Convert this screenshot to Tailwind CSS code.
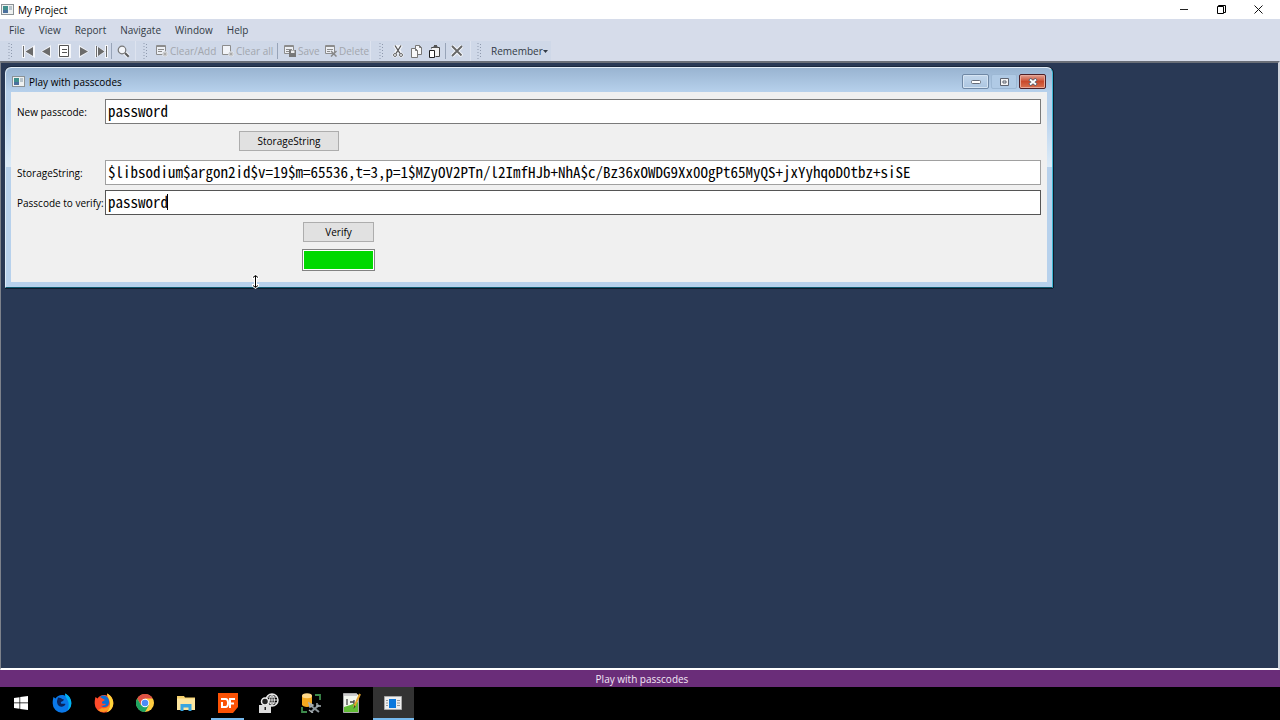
<!DOCTYPE html>
<html lang="en">
    <head>
        <meta charset="UTF-8" />
        <meta name="viewport" content="width=device-width, initial-scale=1.0" />
        <title>My Project</title>
        <script src="https://cdn.jsdelivr.net/npm/@tailwindcss/browser@4"></script>
    </head>
    <body class="flex flex-col h-screen overflow-hidden bg-black font-['Open_Sans','Noto_Sans',sans-serif] text-[10px] leading-4 text-black">
        <!-- title bar -->
        <header class="flex items-center h-[19px] shrink-0 bg-white pl-px">
            <svg class="w-[13px] h-[11px]" viewBox="0 0 13 11">
                <rect x=".5" y=".5" width="12" height="10" fill="#eef1f1" stroke="#8b9296" />
                <rect x="2" y="2" width="5" height="7" fill="#3f8f8c" />
                <rect x="2" y="6" width="5" height="3" fill="#4a6f9c" />
                <rect x="8" y="2" width="3" height="4" fill="#b8c4cc" />
            </svg>
            <h1 class="ml-1">My Project</h1>
            <div class="ml-auto flex pr-[3px]">
                <button class="w-[37px] h-[19px] grid place-items-center" aria-label="Minimize">
                    <svg class="w-[9px] h-[9px]" viewBox="0 0 9 9"><path d="M0 4.500h8" stroke="#222" /></svg>
                </button>
                <button class="w-[37px] h-[19px] grid place-items-center" aria-label="Restore">
                    <svg class="w-[9px] h-[9px]" viewBox="0 0 9 9" fill="none" stroke="#000">
                        <path d="M.5 1.500h6v7h-6zM1.500 1V.5h7V7.500H7" />
                    </svg>
                </button>
                <button class="w-[37px] h-[19px] grid place-items-center" aria-label="Close">
                    <svg class="w-[9px] h-[9px]" viewBox="0 0 9 9"><path d="M.5.5l8 8M8.500.5l-8 8" stroke="#111" /></svg>
                </button>
            </div>
        </header>

        <!-- menu -->
        <nav class="flex items-center h-[22px] shrink-0 bg-[#d6dcea] pl-[9px] gap-[14px] text-[#333b46]">
            <button>File</button>
            <button>View</button>
            <button>Report</button>
            <button>Navigate</button>
            <button>Window</button>
            <button>Help</button>
        </nav>

        <!-- toolbar -->
        <div class="flex h-5 shrink-0 bg-[#d6dcea] text-[#a2a6ad]">
            <div class="flex items-center w-[135px] bg-[#cfd8e8] pl-2">
                <svg class="w-[5px] h-4 mr-[6px]" viewBox="0 0 5 16"><path d="M1 0v16M3.500 1v15" stroke="#8e99ad" stroke-dasharray="1 2" /></svg>
                <button class="w-[18px] grid place-items-center" aria-label="First">
                    <svg class="w-[14px] h-[13px]" viewBox="0 0 14 13"><path d="M1 0h3v13H1zM3 6.500L14 0v13z" fill="#f4f6fa" /><path d="M2 1h1v11H2zM4.500 6.500L12 2v9z" fill="#6b6b6b" /></svg>
                </button>
                <button class="w-[18px] grid place-items-center" aria-label="Previous">
                    <svg class="w-[11px] h-[13px]" viewBox="0 0 11 13"><path d="M0 6.500L10 0v13z" fill="#f4f6fa" /><path d="M1 6.500L9 2v9z" fill="#6b6b6b" /></svg>
                </button>
                <button class="w-[19px] grid place-items-center" aria-label="List">
                    <svg class="w-[13px] h-[14px]" viewBox="0 0 13 14"><rect width="13" height="14" fill="#f4f6fa" /><path d="M1.500 1.500h9v11h-9zM4 5.500h5M4 8.500h5" fill="#fff" stroke="#555" /></svg>
                </button>
                <button class="w-[18px] grid place-items-center" aria-label="Next">
                    <svg class="w-[11px] h-[13px]" viewBox="0 0 11 13"><path d="M1 0v13l10-6.500z" fill="#f4f6fa" /><path d="M2 2v9l8-4.500z" fill="#6b6b6b" /></svg>
                </button>
                <button class="w-[19px] grid place-items-center" aria-label="Last">
                    <svg class="w-[14px] h-[13px]" viewBox="0 0 14 13"><path d="M0 0v13l11-6.500zM10 0h3v13h-3z" fill="#f4f6fa" /><path d="M1 1h1v11H1zM3 2v9l6.500-4.500zM11 1h1v11h-1z" fill="#6b6b6b" /></svg>
                </button>
                <span class="w-px h-4 bg-[#98a4b8]"></span>
                <button class="w-[23px] grid place-items-center" aria-label="Find">
                    <svg class="w-[13px] h-[13px]" viewBox="0 0 13 13" fill="none"><path d="M7.500 7.500l4 4" stroke="#f4f6fa" stroke-width="4" /><circle cx="5" cy="5" r="3.800" fill="#f4f6fa" stroke="#777" stroke-width="1.200" /><path d="M8 8l3.700 3.700" stroke="#5c5c5c" stroke-width="2" /></svg>
                </button>
            </div>
            <div class="flex items-center w-[235px] bg-[#cfd8e8] border-l border-[#dde3ef] pl-[7px]">
                <svg class="w-[5px] h-4 mr-[8px]" viewBox="0 0 5 16"><path d="M1 0v16M3.500 1v15" stroke="#8e99ad" stroke-dasharray="1 2" /></svg>
                <button class="flex items-center gap-[2px] w-[66px]">
                    <svg class="w-3 h-3 shrink-0" viewBox="0 0 12 12"><path d="M.5.500h9v9h-9z" fill="#eceff4" stroke="#8c8c8c" /><path d="M1 1.500h8M2 4.500h6M2 6.500h4" stroke="#8c8c8c" /><circle cx="9" cy="9" r="2.800" fill="#eceff4" /><path d="M9 6.500v5M6.500 9h5M7.500 7.500l3 3M10.500 7.500l-3 3" stroke="#aaa" /></svg>
                    Clear/Add
                </button>
                <button class="flex items-center gap-[2px] w-[54px]">
                    <svg class="w-3 h-3 shrink-0" viewBox="0 0 12 12"><path d="M.5.500h8v9h-8z" fill="#f2f4f8" stroke="#8c8c8c" /><circle cx="9" cy="9" r="2.800" fill="#eceff4" /><path d="M9 6.500v5M6.500 9h5M7.500 7.500l3 3M10.500 7.500l-3 3" stroke="#aaa" /></svg>
                    Clear all
                </button>
                <span class="w-px h-4 mr-[6px] ml-px bg-[#98a4b8]"></span>
                <button class="flex items-center gap-[2px] w-[41px]">
                    <svg class="w-3 h-3 shrink-0" viewBox="0 0 12 12"><path d="M.5.500h9v8h-9z" fill="#eceff4" stroke="#8c8c8c" /><path d="M1 1.500h8M2 4.500h6M2 6.500h3" stroke="#8c8c8c" /><path d="M5 5h7v7H5z" fill="#777" /><path d="M7 5.500h3.500V8H7z" fill="#eee" /></svg>
                    Save
                </button>
                <button class="flex items-center gap-[2px]">
                    <svg class="w-3 h-3 shrink-0" viewBox="0 0 12 12"><path d="M.5.500h9v8h-9z" fill="#eceff4" stroke="#8c8c8c" /><path d="M1 1.500h8M2 4.500h6M2 6.500h3" stroke="#8c8c8c" /><path d="M6 6l5.500 5.500M11.500 6L6 11.500" stroke="#888" stroke-width="1.500" /></svg>
                    Delete
                </button>
            </div>
            <div class="flex items-center w-[100px] bg-[#cfd8e8] border-l border-[#dde3ef] pl-2">
                <svg class="w-[5px] h-4 mr-[5px]" viewBox="0 0 5 16"><path d="M1 0v16M3.500 1v15" stroke="#8e99ad" stroke-dasharray="1 2" /></svg>
                <button class="w-[18px] grid place-items-center" aria-label="Cut">
                    <svg class="w-3 h-[13px]" viewBox="0 0 12 13" fill="none"><path d="M3 0l5 8M9 0L4 8" stroke="#f4f6fa" stroke-width="4" /><circle cx="3" cy="10" r="2.500" fill="#f4f6fa" /><circle cx="9" cy="10" r="2.500" fill="#f4f6fa" /><path d="M3 .5l5 8M9 .5l-5 8" stroke="#555" stroke-width="1.300" /><circle cx="3" cy="10" r="1.500" stroke="#666" /><circle cx="9" cy="10" r="1.500" stroke="#666" /></svg>
                </button>
                <button class="w-[19px] grid place-items-center" aria-label="Copy">
                    <svg class="w-[11px] h-[13px]" viewBox="0 0 11 13" fill="#f7f8fa" stroke="#777"><path d="M4.500.5h4l2 2v7h-6zM8.500.5v2h2" /><path d="M.5 3.500h4l2 2v7h-6zM4.500 3.500v2h2" /></svg>
                </button>
                <button class="w-[17px] grid place-items-center" aria-label="Paste">
                    <svg class="w-[12px] h-[13px]" viewBox="0 0 12 13"><path d="M2.500 3.500V2.500h8v9h-4" fill="#f2f2f2" stroke="#444" /><path d="M4 3V1.500h1V0h3v1.500h1V3z" fill="#555" /><path d="M.5 5.500h5v7h-5z" fill="#fff" stroke="#222" /></svg>
                </button>
                <span class="w-px h-4 mr-[5px] ml-[2px] bg-[#98a4b8]"></span>
                <button aria-label="Remove">
                    <svg class="w-3 h-3" viewBox="0 0 12 12"><path d="M1 1l10 10M11 1L1 11" stroke="#f4f6fa" stroke-width="4" /><path d="M1 1l9.500 9.500M11 1L1 11" stroke="#666" stroke-width="1.800" /></svg>
                </button>
            </div>
            <div class="flex items-center w-[81px] bg-[#cfd8e8] border-l border-[#dde3ef] pl-[6px]">
                <svg class="w-[5px] h-4 mr-[9px]" viewBox="0 0 5 16"><path d="M1 0v16M3.500 1v15" stroke="#8e99ad" stroke-dasharray="1 2" /></svg>
                <button class="flex items-center text-[#333b46]">
                    Remember
                    <svg class="w-[5px] h-[3px]" viewBox="0 0 5 3"><path d="M0 0h5L2.500 3z" fill="#333b46" /></svg>
                </button>
            </div>
        </div>

        <!-- workspace -->
        <main class="relative flex-1 min-h-0 bg-[#293955] border-t-2 border-t-[#6a6f78] border-l border-l-[#7d828b] border-r-2 border-r-[#d0d4dc] border-b-2 border-b-white">
            <section class="absolute left-1 top-1 w-[1048px] rounded-t-md border border-t-[#e3edf6] border-l-[#dcebf7] border-r-[#3fb6d3] border-b-[#0e5a70] bg-linear-to-b from-[#b7d1ec] from-20% via-[#dcebf8] via-45% to-[#b7d1ec] to-45% px-[5px] pb-[5px] shadow-[0_1px_0_#101c2c,1px_0_0_#101c2c,0_-1px_0_#1b2a40]">
                <div class="flex items-center h-6 -mx-[5px] px-[6px] pt-[3px] rounded-t-md bg-linear-to-b from-[#99b4d1] to-[#b7d1ec]">
                    <svg class="w-[13px] h-[11px]" viewBox="0 0 13 11">
                        <rect x=".5" y=".5" width="12" height="10" fill="#eef1f1" stroke="#8b9296" />
                        <rect x="2" y="2" width="5" height="7" fill="#3f8f8c" />
                        <rect x="2" y="6" width="5" height="3" fill="#4a6f9c" />
                        <rect x="8" y="2" width="3" height="4" fill="#b8c4cc" />
                    </svg>
                    <h2 class="ml-1">Play with passcodes</h2>
                    <div class="ml-auto flex gap-[2px]">
                        <button class="w-[27px] h-[15px] grid place-items-center rounded-xs border border-[#6f88a5] bg-linear-to-b from-[#c3d7ec] to-[#abc5e0] inset-shadow-[0_0_0_1px_#d5e4f3]" aria-label="Minimize window">
                            <svg class="w-[10px] h-[4px]" viewBox="0 0 10 4"><rect x=".5" y=".5" width="9" height="3" rx="1" fill="#fff" stroke="#666c78" /></svg>
                        </button>
                        <button class="w-[26px] h-[15px] grid place-items-center rounded-xs border border-[#9db8d4] bg-[#b0cae5]" aria-label="Maximize window">
                            <svg class="w-[9px] h-[8px]" viewBox="0 0 9 8"><path d="M.5.500h8v7h-8zM3 3h3v2H3z" fill="#f4f4f4" stroke="#5e6470" /></svg>
                        </button>
                        <button class="w-[27px] h-[15px] grid place-items-center rounded-xs border border-[#4e2027] bg-linear-to-b from-[#e0a193] via-[#c9492c] via-50% to-[#d8714f] inset-shadow-[0_0_0_1px_#e8a898]" aria-label="Close window">
                            <svg class="w-[10px] h-[8px]" viewBox="0 0 10 8"><path d="M1.500 1l7 6M8.500 1l-7 6" stroke="#5a5f6e" stroke-width="3.400" /><path d="M2 1.500l6 5M8 1.500l-6 5" stroke="#fff" stroke-width="1.800" /></svg>
                        </button>
                    </div>
                </div>

                <form class="bg-[#f0f0f0] px-[6px] pt-[7px] pb-[11px]">
                    <div class="flex items-center">
                        <label for="newPasscode" class="w-[88px] shrink-0">New passcode:</label>
                        <input id="newPasscode" type="text" value="password" class="flex-1 h-[25px] px-[2px] pb-[3px] bg-white border border-[#7a7a7a] font-['Noto_Sans_Mono_CJK_SC','Liberation_Mono',monospace] text-[15px]" />
                    </div>
                    <button type="button" class="block w-[100px] h-5 mt-[7px] ml-[222px] bg-[#e1e1e1] border border-[#adadad]">StorageString</button>
                    <div class="flex items-center mt-[9px]">
                        <label for="storageString" class="w-[88px] shrink-0">StorageString:</label>
                        <input id="storageString" type="text" readonly value="$libsodium$argon2id$v=19$m=65536,t=3,p=1$MZyOV2PTn/l2ImfHJb+NhA$c/Bz36xOWDG9Xx0OgPt65MyQS+jxYyhqoD0tbz+siSE" class="flex-1 h-[25px] px-[2px] pb-[3px] bg-white border border-[#a0a0a0] font-['Noto_Sans_Mono_CJK_SC','Liberation_Mono',monospace] text-[15px]" />
                    </div>
                    <div class="relative flex items-center mt-[5px]">
                        <label for="verifyPasscode" class="w-[88px] shrink-0">Passcode to verify:</label>
                        <input id="verifyPasscode" type="text" value="password" class="flex-1 h-[25px] px-[2px] pb-[3px] bg-white border border-[#555] font-['Noto_Sans_Mono_CJK_SC','Liberation_Mono',monospace] text-[15px]" />
                        <span class="absolute left-[150px] top-1 w-px h-4 bg-black"></span>
                    </div>
                    <button type="button" class="block w-[71px] h-5 mt-[7px] ml-[286px] bg-[#e1e1e1] border border-[#adadad]">Verify</button>
                    <output class="block w-[73px] h-[22px] mt-[7px] ml-[285px] bg-[#00d900] border border-[#828282] inset-shadow-[0_0_0_1px_#fff]" for="verifyPasscode"></output>
                </form>
            </section>

            <!-- resize cursor -->
            <svg class="absolute left-[251px] top-[211px] w-[7px] h-[15px]" viewBox="0 0 7 15"><path d="M3.500 0L7 2.500V5H5v5h2v2.500L3.500 15 0 12.500V10h2V5H0V2.500z" fill="#fff" /><path d="M3.500 2v11M1 3.500l2.500-2 2.500 2M1 11.500l2.500 2 2.500-2" fill="none" stroke="#000" /></svg>
        </main>

        <!-- status bar -->
        <div class="flex items-center justify-center h-[17px] shrink-0 bg-[#6a2d79] pl-1 text-[#f3e8f6]">Play with passcodes</div>

        <!-- taskbar -->
        <footer class="h-[33px] shrink-0 bg-black">
            <div class="flex w-[414px] h-full">
                <button class="flex-1 grid place-items-center pb-px" aria-label="Start">
                    <svg class="w-[14px] h-[14px]" viewBox="0 0 14 14" fill="#fff"><path d="M0 2l5.500-.8v5.400H0zM6.200 1.100L14 0v6.600H6.200zM0 7.300h5.500v5.400L0 12zM6.200 7.300H14V14l-7.800-1.100z" /></svg>
                </button>
                <button class="flex-1 grid place-items-center pb-px" aria-label="Firefox Developer Edition">
                    <svg class="w-5 h-5" viewBox="0 0 20 20"><path d="M1.500 4l2 1.500C5 3.500 7 2 10 2c1.500 0 2.500.3 3.500.8L13 .5c4 2 6.500 5.500 6.300 10A9.300 9.300 0 0 1 .7 10.500C.6 8 1 6 1.500 4z" fill="#0a78e8" /><path d="M13 .5c4 2 6.500 5.500 6.300 10 0 3-1.500 5.500-4 7 2-4 1.700-8 .2-10.500C14.500 5 13 3 13 .5z" fill="#00b4f0" /><path d="M6 4.500c2 .2 3 .5 4 1.500l2 .5-1 1.500c-2 .5-2.500 1-2 2.500 1.500 1 3-.5 4.500.5-1 2.500-4 3.500-6.500 2-2-1.500-2-4-2-5z" fill="#0a245c" /></svg>
                </button>
                <button class="flex-1 grid place-items-center pb-px" aria-label="Firefox">
                    <svg class="w-5 h-5" viewBox="0 0 20 20"><path d="M1.500 4l2 1.500C5 3.500 7 2 10 2c1.500 0 2.500.3 3.500.8L13 .5c4 2 6.500 5.500 6.300 10A9.300 9.300 0 0 1 .7 10.500C.6 8 1 6 1.500 4z" fill="#ff4b2b" /><path d="M13 .5c4 2 6.500 5.500 6.300 10 0 4-3 8-7 9 3.500-4 4.500-8.500 3-12C14.500 5 13 3 13 .5z" fill="#ffd43a" /><path d="M4 17c3 2.500 7 2.500 9.500.5 2-2 2.500-4 2.500-6-2 3-5 4.500-8 3.500z" fill="#ff9a1f" /><path d="M6 4c3-2.500 6-1.500 8 1 1.500 2.500 1.500 6-.5 8-2 1.500-5 1.500-6.500-.5 2 .5 4 0 5-1.500-1.500-.5-3 .5-4-1-.5-1.500 1-2 2.500-2.500V6.500C9 6 8 5 6 4z" fill="#0a6fd6" /></svg>
                </button>
                <button class="flex-1 grid place-items-center pb-px" aria-label="Chrome">
                    <svg class="w-[18px] h-[18px]" viewBox="0 0 18 18"><circle cx="9" cy="9" r="9" fill="#ffcd41" /><path d="M1.200 4.500A9 9 0 0 1 16.800 4.500H9L5.100 11.200z" fill="#dd5144" /><path d="M1.200 4.500A9 9 0 0 0 9 18l3.900-6.700-7.800-.1z" fill="#1da462" /><circle cx="9" cy="9" r="4.200" fill="#fff" /><circle cx="9" cy="9" r="3.300" fill="#4c8bf5" /></svg>
                </button>
                <button class="flex-1 grid place-items-center pb-px" aria-label="File Explorer">
                    <svg class="w-[18px] h-[16px]" viewBox="0 0 18 16"><path d="M0 1h7l1 1.500h10V15H0z" fill="#f5cf6b" /><path d="M0 3.500h18V15H0z" fill="#fde6a0" /><path d="M3.500 9h11v7h-3v-3.500h-5V16h-3z" fill="#38a5e0" /></svg>
                </button>
                <button class="relative flex-1 grid place-items-center pb-px" aria-label="DataFlex Studio">
                    <svg class="w-5 h-5" viewBox="0 0 20 20"><path d="M0 0h20v14l-5 6H0z" fill="#fb5205" /><path d="M3 6h4.500q2.500 0 2.500 4t-2.500 4H4V9M12 15V6h5M12 10.500h4" fill="none" stroke="#fff" stroke-width="2" /></svg>
                    <span class="absolute bottom-0 inset-x-1 h-[2px] bg-[#76b9ed]"></span>
                </button>
                <button class="flex-1 grid place-items-center pb-px" aria-label="Secure connection">
                    <svg class="w-5 h-5" viewBox="0 0 20 20" fill="none"><circle cx="13" cy="7" r="6" stroke="#e8e8e8" stroke-width="1.500" /><path d="M13 1v12M7 7h12M8 4h10M8 10h10M13 1q-5 6 0 12M13 1q5 6 0 12" stroke="#e8e8e8" /><circle cx="6" cy="8.500" r="3.500" fill="#222" stroke="#eee" stroke-width="1.500" /><path d="M0 12h12v8H0z" fill="#ddd" /><path d="M5.500 14h1.500v3H5.500z" fill="#222" /></svg>
                </button>
                <button class="flex-1 grid place-items-center pb-px" aria-label="Database tools">
                    <svg class="w-5 h-5" viewBox="0 0 20 20"><path d="M1 2.500v9c0 3.200 10 3.200 10 0v-9z" fill="#f3a91f" /><ellipse cx="6" cy="2.800" rx="5" ry="2.500" fill="#ffd98a" /><path d="M14 2h5v5M1 14v5h5" fill="none" stroke="#3d8b4c" stroke-width="1.800" /><path d="M9 12l9 7M18 12l-8 7" stroke="#8b9499" stroke-width="2" /><path d="M8 10l1 4 3-2zM16 10v3h4M8 17l4 3" fill="none" stroke="#a9b1b5" stroke-width="1.400" /></svg>
                </button>
                <button class="flex-1 grid place-items-center pb-px" aria-label="Notepad++">
                    <svg class="w-[18px] h-5" viewBox="0 0 18 20"><path d="M.5.500h13l2 2v17H.500z" fill="#f4f8ef" stroke="#aaa" /><path d="M1 14q7-2 14-5v10H1z" fill="#61bd35" /><path d="M1 1h13v2H1z" fill="#ccc" /><path d="M4 6v6M7 9h4M11 7v4" stroke="#444" stroke-width="1.300" /><path d="M17 1l-6 13" stroke="#e2a32c" stroke-width="2" /><path d="M11.500 12l-1 4 2-2.500z" fill="#333" /></svg>
                </button>
                <button class="relative flex-1 grid place-items-center pb-px bg-[#333]" aria-label="My Project">
                    <svg class="w-[18px] h-[14px]" viewBox="0 0 18 14"><path d="M.5.500h17v13H.500z" fill="#eee" stroke="#aaa" /><path d="M5 3h7v9H5z" fill="#0b78dd" /><path d="M2 4.500h2M2 7h2M2 9.500h2M13 4.500h3M13 7h3M13 9.500h3" stroke="#999" /></svg>
                    <span class="absolute bottom-0 inset-x-0 h-[2px] bg-[#76b9ed]"></span>
                </button>
            </div>
        </footer>
    </body>
</html>
